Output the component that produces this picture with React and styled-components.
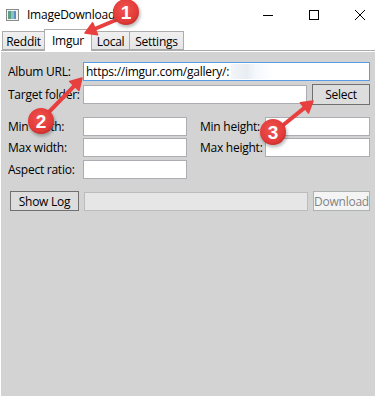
import React from "react";
import styled, { createGlobalStyle } from "styled-components";

const Global = createGlobalStyle`
  html, body { margin: 0; padding: 0; background: #fff; }
  body { font-family: "Open Sans", "Noto Sans", sans-serif; }
  #root { width: 375px; height: 396px; overflow: hidden; }
`;

const Window = styled.div`
  position: relative;
  width: 375px;
  height: 396px;
  display: flex;
  flex-direction: column;
  background: #fff;
  overflow: hidden;
  font-family: "Open Sans", "Noto Sans", sans-serif;
  font-size: 12px;
  letter-spacing: -0.25px;
  color: #000;
`;

const TitleBar = styled.div`
  height: 29px;
  flex: none;
  display: flex;
  align-items: center;
  padding-left: 6px;
`;

const Title = styled.span`
  margin-left: 8px;
  font-size: 12px;
  color: #000;
`;

const Caption = styled.div`
  margin-left: auto;
  margin-right: -8px;
  display: flex;
  height: 29px;
`;

const CaptionButton = styled.div`
  width: 46px;
  height: 29px;
  display: flex;
  align-items: center;
  justify-content: center;
`;

const TabStrip = styled.div`
  height: 21px;
  flex: none;
  display: flex;
  align-items: flex-end;
  padding-left: 2px;
  position: relative;
  z-index: 1;
`;

const Tab = styled.div`
  box-sizing: border-box;
  height: ${(p) => (p.$active ? "22px" : "19px")};
  width: ${(p) => p.$w}px;
  margin-left: ${(p) => (p.$first ? "0" : "-1px")};
  margin-bottom: ${(p) => (p.$active ? "-1px" : "0")};
  border: 1px solid #acacac;
  border-bottom: ${(p) => (p.$active ? "none" : "1px solid #acacac")};
  background: ${(p) => (p.$active ? "#fff" : "linear-gradient(#f0f0f0, #e5e5e5)")};
  display: flex;
  align-items: center;
  justify-content: center;
  padding-top: ${(p) => (p.$active ? "0" : "1px")};
  font-size: 12px;
  position: relative;
  z-index: ${(p) => (p.$active ? 2 : 1)};
`;

const Panel = styled.div`
  flex: 1;
  margin-left: 1px;
  border-top: 1px solid #acacac;
  box-shadow: inset 0 1px 0 #fff;
  padding: 11px 0 0 7px;
  background: #d3d3d3;
  display: flex;
  flex-direction: column;
`;

const Row = styled.div`
  display: flex;
  align-items: center;
  height: ${(p) => p.$h || 19}px;
  margin-top: ${(p) => p.$mt || 0}px;
`;

const Label = styled.span`
  width: ${(p) => p.$w}px;
  flex: none;
  white-space: nowrap;
  overflow: hidden;
  font-size: 12px;
  color: #000;
  margin-left: ${(p) => p.$ml || 0}px;
`;

const TextBox = styled.div`
  box-sizing: border-box;
  width: ${(p) => p.$w}px;
  height: 19px;
  flex: none;
  background: #fff;
  border: 1px solid ${(p) => (p.$focus ? "#569de5" : "#abadb3")};
  display: flex;
  align-items: center;
  padding-left: 2px;
  font-size: 12px;
  white-space: nowrap;
  overflow: hidden;
  position: relative;
`;

const Blur = styled.span`
  display: inline-block;
  width: 40px;
  height: 15px;
  margin-left: 2px;
  background: linear-gradient(90deg, #f2f5f8 0%, #e8edf3 40%, #f4f8fd 60%, #fdfeff 100%);
`;

const Button = styled.div`
  box-sizing: border-box;
  width: ${(p) => p.$w}px;
  height: ${(p) => p.$h || 20}px;
  flex: none;
  margin-left: ${(p) => p.$ml || 0}px;
  border: 1px solid ${(p) => (p.$disabled ? "#adb2b5" : "#707070")};
  background: ${(p) => (p.$disabled ? "#f4f4f4" : "#dddddd")};
  color: ${(p) => (p.$disabled ? "#838383" : "#000")};
  display: flex;
  align-items: center;
  justify-content: center;
  font-size: 12px;
  white-space: nowrap;
  overflow: hidden;
`;

const Progress = styled.div`
  box-sizing: border-box;
  width: 224px;
  height: 19px;
  margin-left: 5px;
  flex: none;
  background: #e6e6e6;
  border: 1px solid #bcbcbc;
`;

const Overlay = styled.svg`
  position: absolute;
  left: 0;
  top: 0;
  width: 375px;
  height: 396px;
  pointer-events: none;
  z-index: 10;
`;

const RED = "#e8403f";

function Arrow({ x1, y1, x2, y2 }) {
  const dx = x2 - x1;
  const dy = y2 - y1;
  const len = Math.hypot(dx, dy);
  const ux = dx / len;
  const uy = dy / len;
  const hl = 11;
  const hw = 6.5;
  const bx = x2 - ux * hl;
  const by = y2 - uy * hl;
  const px = -uy;
  const py = ux;
  const pts = `${x2},${y2} ${bx + px * hw},${by + py * hw} ${bx - px * hw},${by - py * hw}`;
  return (
    <g>
      <line x1={x1} y1={y1} x2={bx + ux * 2} y2={by + uy * 2} stroke={RED} strokeWidth="4" strokeLinecap="round" />
      <polygon points={pts} fill={RED} stroke={RED} strokeWidth="1.5" strokeLinejoin="round" />
    </g>
  );
}

function Badge({ cx, cy, n }) {
  return (
    <g>
      <circle cx={cx + 1} cy={cy + 2} r="13.5" fill="rgba(0,0,0,0.25)" filter="url(#soft)" />
      <circle cx={cx} cy={cy} r="13" fill="url(#badge)" />
      <text
        x={cx}
        y={cy + 6.5}
        textAnchor="middle"
        fontFamily="'Liberation Sans', Arial, sans-serif"
        fontWeight="bold"
        fontSize="19"
        fill="#fff"
      >
        {n}
      </text>
    </g>
  );
}

export default function App() {
  return (
    <>
      <Global />
      <Window>
        <TitleBar>
          <svg width="13" height="12" viewBox="0 0 13 12">
            <rect x="0.5" y="0.5" width="12" height="11" fill="#f4f4f4" stroke="#8a8a8a" />
            <rect x="2" y="2" width="3" height="8" fill="#5a9f8a" />
            <rect x="5" y="2" width="3" height="8" fill="#8fc3b3" />
            <rect x="8" y="2" width="2" height="8" fill="#5b8fc9" />
          </svg>
          <Title>ImageDownload</Title>
          <Caption>
            <CaptionButton>
              <svg width="10" height="10" viewBox="0 0 10 10">
                <line x1="0" y1="5.5" x2="10" y2="5.5" stroke="#000" strokeWidth="1" />
              </svg>
            </CaptionButton>
            <CaptionButton>
              <svg width="10" height="10" viewBox="0 0 10 10">
                <rect x="0.5" y="0.5" width="9" height="9" fill="none" stroke="#000" strokeWidth="1" />
              </svg>
            </CaptionButton>
            <CaptionButton>
              <svg width="10" height="10" viewBox="0 0 10 10">
                <path d="M0 0 L10 10 M10 0 L0 10" stroke="#000" strokeWidth="1" />
              </svg>
            </CaptionButton>
          </Caption>
        </TitleBar>
        <TabStrip>
          <Tab $first $w={43}>Reddit</Tab>
          <Tab $active $w={48}>Imgur</Tab>
          <Tab $w={39}>Local</Tab>
          <Tab $w={55}>Settings</Tab>
        </TabStrip>
        <Panel>
          <Row>
            <Label $w={75}>Album URL:</Label>
            <TextBox $w={287} $focus>
              https://imgur.com/gallery/:<Blur />
            </TextBox>
          </Row>
          <Row $h={21} $mt={3}>
            <Label $w={75}>Target folder:</Label>
            <TextBox $w={224} />
            <Button $w={58} $h={21} $ml={5}>Select</Button>
          </Row>
          <Row $mt={12}>
            <Label $w={75}>Min width:</Label>
            <TextBox $w={104} />
            <Label $w={65} $ml={13}>Min height:</Label>
            <TextBox $w={105} />
          </Row>
          <Row $mt={2}>
            <Label $w={75}>Max width:</Label>
            <TextBox $w={104} />
            <Label $w={65} $ml={13}>Max height:</Label>
            <TextBox $w={105} />
          </Row>
          <Row $mt={3}>
            <Label $w={75}>Aspect ratio:</Label>
            <TextBox $w={104} />
          </Row>
          <Row $h={20} $mt={12}>
            <Button $w={69} $ml={2}>Show Log</Button>
            <Progress />
            <Button $w={57} $ml={5} $disabled>Download</Button>
          </Row>
        </Panel>
        <Overlay viewBox="0 0 375 396">
          <defs>
            <radialGradient id="badge" cx="0.45" cy="0.4" r="0.6">
              <stop offset="0" stopColor="#f0534f" />
              <stop offset="0.8" stopColor="#e23b39" />
              <stop offset="1" stopColor="#c92f2e" />
            </radialGradient>
            <filter id="soft" x="-50%" y="-50%" width="200%" height="200%">
              <feGaussianBlur stdDeviation="1.5" />
            </filter>
          </defs>
          <Arrow x1={116} y1={20} x2={85} y2={33} />
          <Arrow x1={48} y1={113} x2={82} y2={78} />
          <Arrow x1={282} y1={126} x2={313} y2={101} />
          <Badge cx={126} cy={12} n="1" />
          <Badge cx={41} cy={121} n="2" />
          <Badge cx={273} cy={132} n="3" />
        </Overlay>
      </Window>
    </>
  );
}
